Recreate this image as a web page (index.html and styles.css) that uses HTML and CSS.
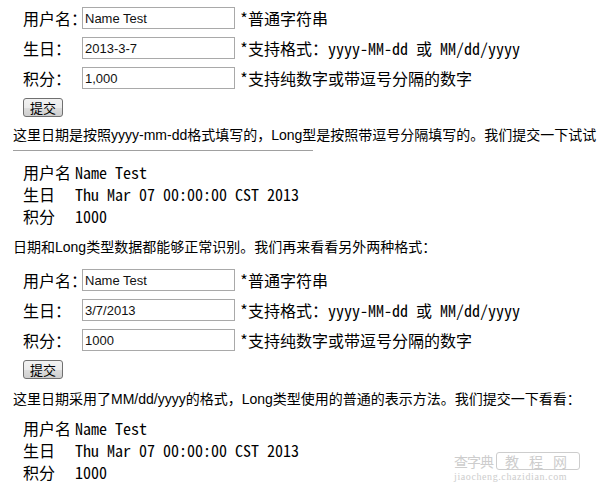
FILE: index.html
```html
<!DOCTYPE html>
<html lang="zh-CN">
<head>
  <meta charset="UTF-8">
  <title>日期和数字格式转换</title>
  <link rel="stylesheet" href="styles.css">
</head>
<body>
  <!-- 第一次提交：yyyy-MM-dd 与带逗号的数字 -->
  <form class="entry">
    <div class="row">
      <label class="label">用户名：</label>
      <input class="field" type="text" value="Name Test">
      <span class="hint">*普通字符串</span>
    </div>
    <div class="row">
      <label class="label">生日：</label>
      <input class="field" type="text" value="2013-3-7">
      <span class="hint">*支持格式：yyyy-MM-dd 或 MM/dd/yyyy</span>
    </div>
    <div class="row">
      <label class="label">积分：</label>
      <input class="field" type="text" value="1,000">
      <span class="hint">*支持纯数字或带逗号分隔的数字</span>
    </div>
    <button class="submit" type="button">提交</button>
  </form>

  <p class="note">这里日期是按照yyyy-mm-dd格式填写的，Long型是按照带逗号分隔填写的。我们提交一下试试</p>
  <div class="rule"></div>

  <table class="result">
    <tr><td class="key">用户名</td><td class="val">Name Test</td></tr>
    <tr><td class="key">生日</td><td class="val">Thu Mar 07 00:00:00 CST 2013</td></tr>
    <tr><td class="key">积分</td><td class="val">1000</td></tr>
  </table>

  <p class="note note-mid">日期和Long类型数据都能够正常识别。我们再来看看另外两种格式：</p>

  <!-- 第二次提交：MM/dd/yyyy 与普通数字 -->
  <form class="entry entry-second">
    <div class="row">
      <label class="label">用户名：</label>
      <input class="field" type="text" value="Name Test">
      <span class="hint">*普通字符串</span>
    </div>
    <div class="row">
      <label class="label">生日：</label>
      <input class="field" type="text" value="3/7/2013">
      <span class="hint">*支持格式：yyyy-MM-dd 或 MM/dd/yyyy</span>
    </div>
    <div class="row">
      <label class="label">积分：</label>
      <input class="field" type="text" value="1000">
      <span class="hint">*支持纯数字或带逗号分隔的数字</span>
    </div>
    <button class="submit" type="button">提交</button>
  </form>

  <p class="note note-mid">这里日期采用了MM/dd/yyyy的格式，Long类型使用的普通的表示方法。我们提交一下看看：</p>

  <table class="result result-last">
    <tr><td class="key">用户名</td><td class="val">Name Test</td></tr>
    <tr><td class="key">生日</td><td class="val">Thu Mar 07 00:00:00 CST 2013</td></tr>
    <tr><td class="key">积分</td><td class="val">1000</td></tr>
  </table>

  <div class="watermark">
    <div class="mark-top"><span class="mark-logo">查字典</span><span class="mark-box">教程网</span></div>
    <div class="mark-url">jiaocheng.chazidian.com</div>
  </div>
</body>
</html>
```

FILE: styles.css
```css
:root {
  --text-color: #000;
  --border-color: #a9a9a9;
  --mark-color: #cdcdcd;
}

* {
  margin: 0;
  padding: 0;
  box-sizing: border-box;
}

body {
  position: relative;
  width: 597px;
  height: 486px;
  overflow: hidden;
  background-color: white;
  color: var(--text-color);
  font-family: "Noto Sans Mono CJK SC", "Liberation Mono", "Noto Sans CJK SC", monospace;
  font-size: 16px;
  line-height: 22px;
}

/* Form */
.entry {
  padding: 7px 0 0 23px;
  display: flex;
  flex-direction: column;
  gap: 8px;
}

.entry-second {
  padding-top: 13px;
}

.row {
  display: flex;
  align-items: center;
  height: 22px;
}

.label {
  width: 59px;
  white-space: nowrap;
  font-family: "Noto Sans CJK SC", sans-serif;
}

.field {
  width: 153px;
  height: 22px;
  padding: 0 2px;
  border: 1px solid var(--border-color);
  font-family: "Liberation Sans", Arial, sans-serif;
  font-size: 13px;
  color: #111;
  outline: none;
}

.hint {
  margin-left: 5px;
  white-space: nowrap;
}

.submit {
  align-self: flex-start;
  margin-top: 1px;
  width: 40px;
  height: 19px;
  border: 1px solid #707070;
  border-radius: 3px;
  background: linear-gradient(#f2f2f2, #ebebeb 50%, #dddddd 51%, #cfcfcf);
  font-family: "Noto Sans CJK SC", sans-serif;
  font-size: 13px;
  line-height: 17px;
  color: #000;
}

/* Notes */
.note {
  margin: 9px 0 0 13px;
  line-height: 18px;
  white-space: nowrap;
  font-family: "Liberation Sans", "Noto Sans CJK SC", sans-serif;
  font-size: 14px;
}

.note-mid {
  margin-top: 11px;
}

.rule {
  margin: 6px 0 0 13px;
  width: 300px;
  height: 1px;
  background-color: #a0a0a0;
}

/* Results */
.result {
  margin: 10px 0 0 23px;
  border-collapse: collapse;
}

.result-last {
  margin-top: 9px;
}

.result td {
  height: 22px;
  padding: 0;
  line-height: 22px;
  white-space: nowrap;
}

.result .key {
  width: 52px;
  font-family: "Noto Sans CJK SC", sans-serif;
}

/* Watermark */
.watermark {
  position: absolute;
  right: 17px;
  bottom: 4px;
  color: var(--mark-color);
  font-family: "Noto Sans CJK SC", sans-serif;
}

.mark-top {
  display: flex;
  align-items: center;
  gap: 3px;
}

.mark-logo {
  font-size: 14px;
  line-height: 18px;
  letter-spacing: -1px;
}

.mark-box {
  padding: 0 2px 0 8px;
  border: 1px solid var(--mark-color);
  border-radius: 3px;
  font-size: 14px;
  line-height: 16px;
  letter-spacing: 10px;
}

.mark-url {
  margin-top: 2px;
  font-family: "Liberation Serif", serif;
  font-size: 10px;
  line-height: 10px;
  letter-spacing: 0.6px;
}
```
